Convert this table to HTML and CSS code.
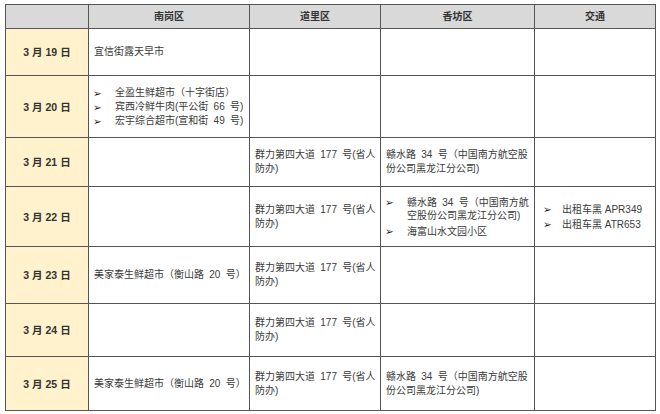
FILE: index.html
```html
<!DOCTYPE html>
<html lang="zh">
<head>
<meta charset="utf-8">
<link rel="stylesheet" href="styles.css">
</head>
<body>
<table class="sched">
  <colgroup>
    <col class="c-date"><col class="c-ng"><col class="c-dl"><col class="c-xf"><col class="c-jt">
  </colgroup>
  <thead>
    <tr class="r-head">
      <th></th><th>南岗区</th><th>道里区</th><th>香坊区</th><th>交通</th>
    </tr>
  </thead>
  <tbody>
    <tr class="r1">
      <td class="date">3 月 19 日</td>
      <td>宜信街露天早市</td><td></td><td></td><td></td>
    </tr>
    <tr class="r2">
      <td class="date">3 月 20 日</td>
      <td>
        <ul class="blist">
          <li>全盈生鲜超市（十字街店）</li>
          <li>宾西冷鲜牛肉(平公街 66 号)</li>
          <li>宏宇综合超市(宣和街 49 号)</li>
        </ul>
      </td>
      <td></td><td></td><td></td>
    </tr>
    <tr class="r3">
      <td class="date">3 月 21 日</td>
      <td></td>
      <td>群力第四大道 177 号(省人<br>防办)</td>
      <td>赣水路 34 号（中国南方航空股<br>份公司黑龙江分公司)</td>
      <td></td>
    </tr>
    <tr class="r4">
      <td class="date">3 月 22 日</td>
      <td></td>
      <td>群力第四大道 177 号(省人<br>防办)</td>
      <td>
        <ul class="blist tight">
          <li>赣水路 34 号（中国南方航<br>空股份公司黑龙江分公司)</li>
          <li>海富山水文园小区</li>
        </ul>
      </td>
      <td>
        <ul class="blist wide">
          <li>出租车黑 APR349</li>
          <li>出租车黑 ATR653</li>
        </ul>
      </td>
    </tr>
    <tr class="r5">
      <td class="date">3 月 23 日</td>
      <td>美家泰生鲜超市（衡山路 20 号）</td>
      <td>群力第四大道 177 号(省人<br>防办)</td>
      <td></td><td></td>
    </tr>
    <tr class="r6">
      <td class="date">3 月 24 日</td>
      <td></td>
      <td>群力第四大道 177 号(省人<br>防办)</td>
      <td></td><td></td>
    </tr>
    <tr class="r7">
      <td class="date">3 月 25 日</td>
      <td>美家泰生鲜超市（衡山路 20 号）</td>
      <td>群力第四大道 177 号(省人<br>防办)</td>
      <td>赣水路 34 号（中国南方航空股<br>份公司黑龙江分公司)</td>
      <td></td>
    </tr>
  </tbody>
</table>
</body>
</html>
```

FILE: styles.css
```css
html, body {
  margin: 0;
  padding: 0;
  background: #ffffff;
}

body {
  padding: 4px 0 0 5px;
  font-family: "Liberation Sans", "Noto Sans CJK SC", sans-serif;
  font-size: 10px;
  color: #3a3a3a;
}

.sched {
  border-collapse: collapse;
  table-layout: fixed;
  width: 650px;
}

.c-date { width: 83px; }
.c-ng { width: 161px; }
.c-dl { width: 131px; }
.c-xf { width: 154px; }
.c-jt { width: 121px; }

.sched th,
.sched td {
  border: 1px solid #555555;
  padding: 0 5px;
  vertical-align: middle;
  line-height: 14px;
  text-align: left;
  white-space: nowrap;
  overflow: hidden;
}

.sched td {
  word-spacing: 2.5px;
}

.sched th {
  background: #d9d9d9;
  font-weight: bold;
  text-align: center;
  color: #333333;
}

.sched td.date {
  background: #fff2cc;
  font-weight: bold;
  text-align: center;
  color: #333333;
  font-size: 10.5px;
  word-spacing: 0;
}

.r-head { height: 24px; }
.r1 { height: 47px; }
.r2 { height: 62px; }
.r3 { height: 49px; }
.r4 { height: 60px; }
.r5 { height: 57px; }
.r6 { height: 53px; }
.r7 { height: 54px; }

.blist {
  list-style: none;
  margin: 0;
  padding: 0;
}

.blist li {
  position: relative;
  padding-left: 21px;
}

.blist li::before {
  content: "\27A2";
  position: absolute;
  left: -1px;
  top: 0;
  font-family: "DejaVu Sans", sans-serif;
  font-size: 10.5px;
  color: #1a1a1a;
}

.blist.tight li {
  line-height: 13px;
}

.blist.tight li + li {
  margin-top: 3px;
}

.blist.wide {
  padding-left: 4px;
  word-spacing: 0;
}

.blist.wide li {
  padding-left: 18px;
  line-height: 15px;
}
```
